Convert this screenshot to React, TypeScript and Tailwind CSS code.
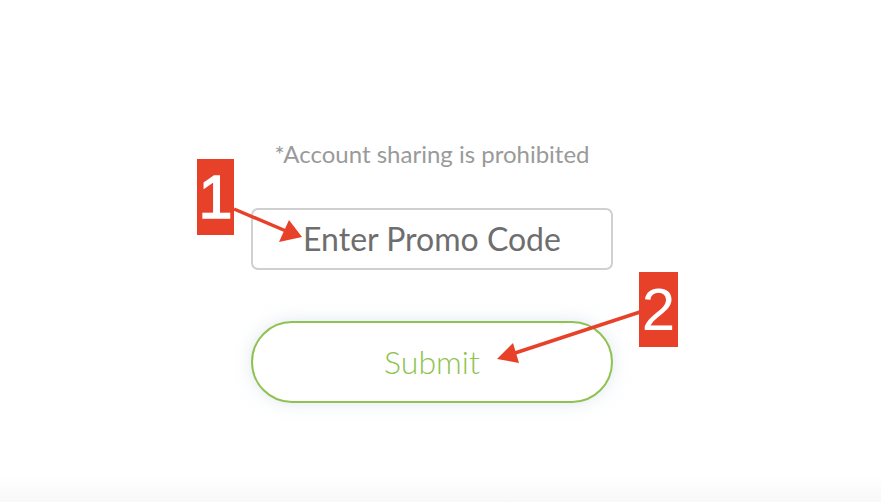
import React from "react";

export default function App() {
  return (
    <div
      className="relative w-[881px] h-[502px] overflow-hidden bg-white"
      style={{ fontFamily: "Lato, 'Open Sans', sans-serif" }}
    >
      <div className="flex justify-center pr-[17px] pt-[140px]">
        <div className="flex w-[362px] flex-col items-center">
          <p className="text-[24px] leading-[28px] text-[#9a9a9a]">*Account sharing is prohibited</p>
          <div className="mt-[40px] flex h-[62px] w-[362px] items-center justify-center rounded-[7px] border-2 border-[#d0d0d0]">
            <span className="text-[32px] leading-none text-[#6e6e6e]">Enter Promo Code</span>
          </div>
          <button className="mt-[51px] flex h-[82px] w-[362px] items-center justify-center rounded-full border-2 border-[#8fc250] bg-white shadow-[0_0_18px_rgba(170,190,205,0.35)]">
            <span className="text-[32px] leading-none font-light text-[#8dc34f]">Submit</span>
          </button>
        </div>
      </div>

      <div className="absolute bottom-0 left-0 h-[26px] w-full bg-gradient-to-b from-white to-[#f8f8f8]" />

      {/* Annotation 1 */}
      <div
        className="absolute left-[197px] top-[159px] flex h-[76px] w-[37px] items-center justify-center bg-[#e8412a] text-[61px] leading-none text-white [-webkit-text-stroke:1.5px_white]"
        style={{ fontFamily: "'Liberation Sans', Arial, sans-serif" }}
      >
        1
      </div>
      {/* Annotation 2 */}
      <div
        className="absolute left-[639px] top-[272px] flex h-[75px] w-[39px] items-center justify-center bg-[#e8412a] text-[60px] leading-none text-white"
        style={{ fontFamily: "'Liberation Sans', Arial, sans-serif" }}
      >
        2
      </div>

      <svg className="absolute left-0 top-0" width="881" height="502" viewBox="0 0 881 502">
        <line x1="234" y1="209" x2="286" y2="231" stroke="#e8412a" strokeWidth="3.5" />
        <polygon points="302,237 279,242 289,220" fill="#e8412a" />
        <line x1="640" y1="312" x2="512" y2="354" stroke="#e8412a" strokeWidth="3.5" />
        <polygon points="497,359 513,343 519,363" fill="#e8412a" />
      </svg>
    </div>
  );
}
